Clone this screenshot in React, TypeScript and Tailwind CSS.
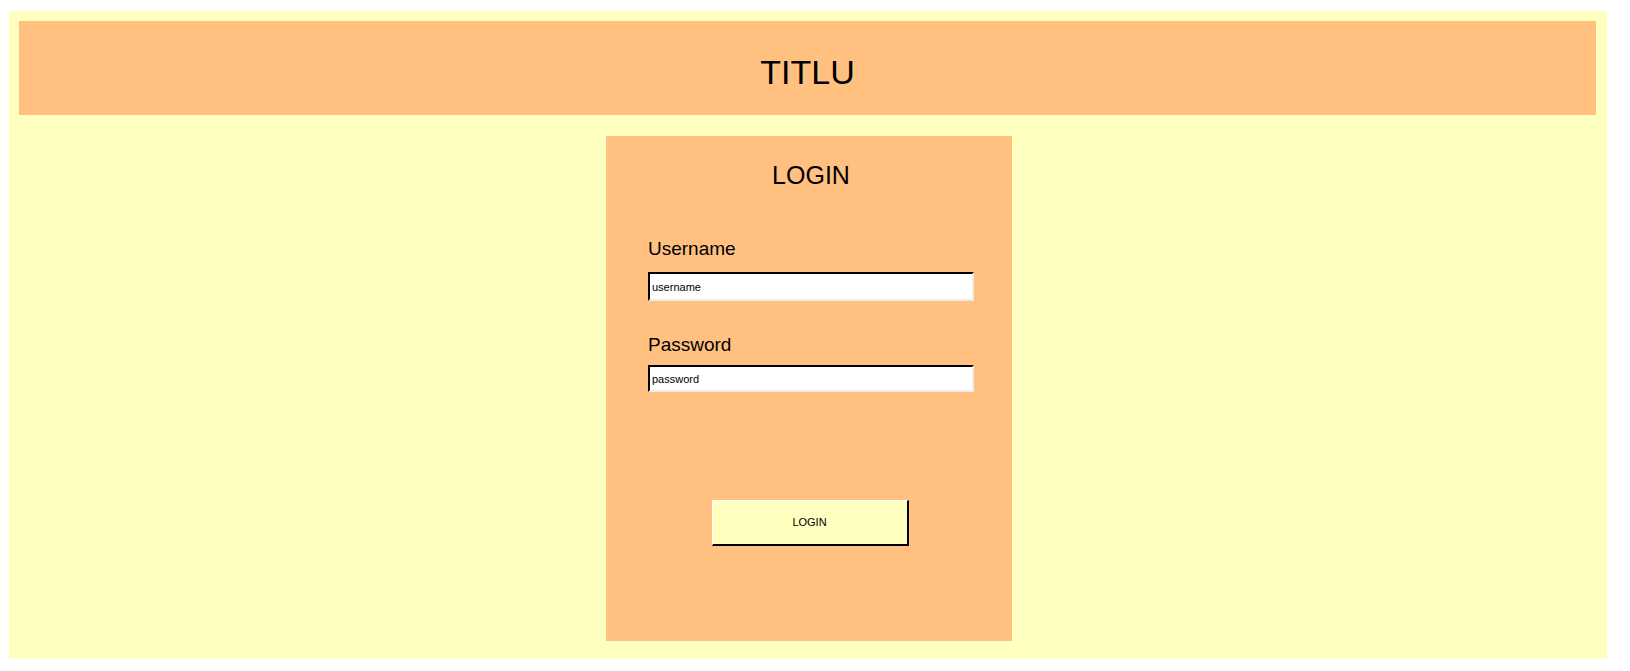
import React, { useState } from "react";

const App = () => {
  const [username, setUsername] = useState("username");
  const [password, setPassword] = useState("password");

  return (
    <div className="min-h-[671px] bg-white pt-[11px] pl-[9px] font-['Liberation_Sans',Arial,sans-serif] text-black">
      <div className="flex flex-col w-[1598px] h-[648px] bg-[#ffffc0] pt-[10px] pl-[10px]">
        <div className="w-[1577px] h-[94px] bg-[#ffc080] pt-[32px] text-center">
          <h1 className="text-[34px] leading-[38px]">TITLU</h1>
        </div>

        <div className="flex justify-center pt-[21px] pr-[8px]">
          <form
            onSubmit={(e) => e.preventDefault()}
            className="flex flex-col w-[406px] h-[505px] bg-[#ffc080] pt-[25px] pl-[42px] pr-[38px]"
          >
            <h2 className="text-[25px] leading-[28px] text-center">LOGIN</h2>

            <label className="mt-[49px] text-[19px] leading-[22px]">
              Username
            </label>
            <input
              value={username}
              onChange={(e) => setUsername(e.target.value)}
              className="mt-[12px] h-[29px] w-[326px] bg-white px-[2px] text-[11px] border-2 border-t-black border-l-black border-b-[#ececec] border-r-[#ececec] outline-none"
            />

            <label className="mt-[33px] text-[19px] leading-[22px]">
              Password
            </label>
            <input
              value={password}
              onChange={(e) => setPassword(e.target.value)}
              className="mt-[9px] h-[27px] w-[326px] bg-white px-[2px] text-[11px] border-2 border-t-black border-l-black border-b-[#ececec] border-r-[#ececec] outline-none"
            />

            <div className="flex justify-center mt-[108px] -ml-[2px]">
              <button
                type="submit"
                className="w-[197px] h-[46px] bg-[#ffffc0] text-[11px] border-t border-l border-white border-b-2 border-r-2 border-b-black border-r-black"
              >
                LOGIN
              </button>
            </div>
          </form>
        </div>
      </div>
    </div>
  );
};

export default App;
